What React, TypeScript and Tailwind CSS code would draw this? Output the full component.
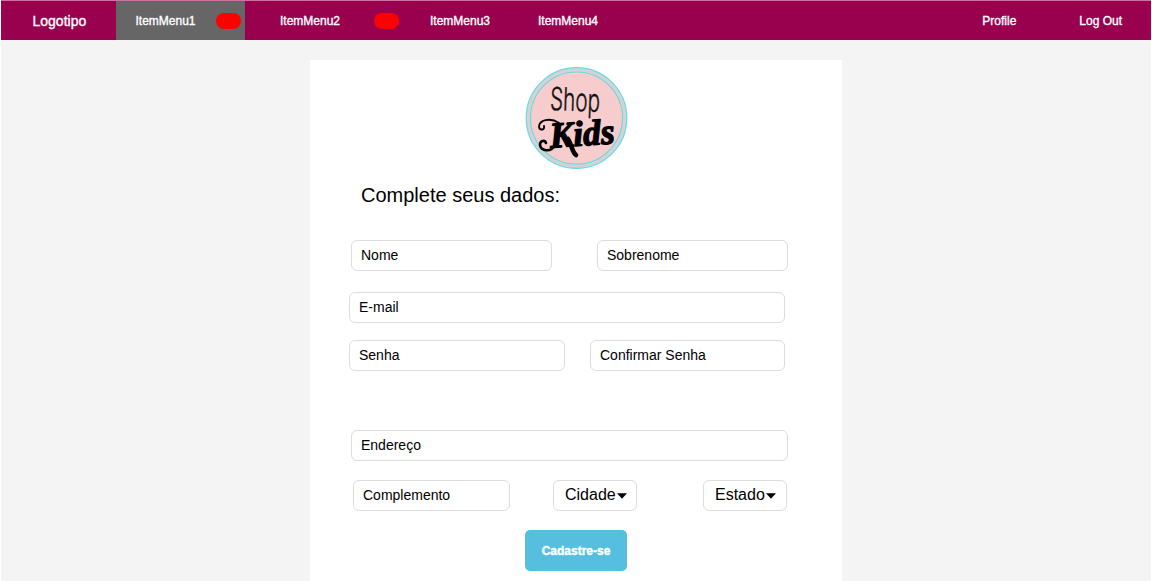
import React from "react";

function Field({ label, className }: { label: string; className: string }) {
  return (
    <div
      className={`flex h-[31px] shrink-0 items-center rounded-[6px] border border-[#dcdcdc] bg-white pb-[2px] pl-[9px] text-[14px] leading-none ${className}`}
    >
      {label}
    </div>
  );
}

function Select({ label, className }: { label: string; className: string }) {
  return (
    <div
      className={`flex h-[31px] w-[84px] shrink-0 items-center rounded-[6px] border border-[#dcdcdc] bg-white pb-[2px] pl-[11px] text-[16px] leading-none ${className}`}
    >
      {label}
      <svg className="mt-[3px] ml-[1px] shrink-0" width="10" height="6" viewBox="0 0 10 6">
        <path d="M0 0.2H10L5 5.8Z" fill="#000" />
      </svg>
    </div>
  );
}

function Badge({ className }: { className: string }) {
  return <span className={`h-[16px] w-[25px] shrink-0 rounded-[8px] bg-[#ff0000] ${className}`} />;
}

function Logo() {
  return (
    <svg className="ml-[215px] block" width="104" height="104" viewBox="0 0 104 104">
      <circle cx="51.5" cy="52" r="50.3" fill="#d3d3d5" stroke="#67dbe2" strokeWidth="1.2" />
      <circle cx="51.5" cy="52" r="46" fill="#f6cccc" stroke="#67dbe2" strokeWidth="1.1" />
      <text
        x="25"
        y="45"
        fontFamily="Inter, sans-serif"
        fontWeight="300"
        fontSize="32"
        textLength="50"
        lengthAdjust="spacingAndGlyphs"
        fill="#111"
        stroke="#111"
        strokeWidth="0.4"
        transform="rotate(2 50 35)"
      >
        Shop
      </text>
      <g transform="rotate(-4 52 75)">
        <text
          x="25"
          y="80"
          fontFamily="'Liberation Serif', serif"
          fontWeight="700"
          fontStyle="italic"
          fontSize="36"
          textLength="65"
          lengthAdjust="spacingAndGlyphs"
          fill="#000"
          stroke="#000"
          strokeWidth="1.3"
          strokeLinejoin="round"
        >
          Kids
        </text>
      </g>
      <g fill="none" stroke="#000" strokeLinecap="round">
        <path d="M34 57C25 51 14 54 14 61C15 65 20 64 19 60" strokeWidth="1.9" />
        <path d="M30 79C26 87 16 85 15 79C15 74 20 74 21 77" strokeWidth="2.6" />
        <path d="M43 73C47 79 47 86 51 89" strokeWidth="4.6" />
      </g>
    </svg>
  );
}

export default function App() {
  return (
    <div className="h-[581px] w-[1152px] overflow-hidden bg-white px-px font-['Liberation_Sans',Arial,sans-serif] text-black">
      <div className="flex h-full flex-col bg-[#f4f4f4]">
        <nav className="flex h-[40px] shrink-0 items-center border-t border-[#d171a3] bg-[#99004d] text-[12px] leading-none whitespace-nowrap text-white [-webkit-text-stroke:0.35px_white]">
          <div className="w-[115px] shrink-0 pl-[31.5px] text-[14px]">Logotipo</div>
          <div className="flex h-full w-[129px] shrink-0 items-center bg-[#666666] pl-[19.5px]">
            <span className="w-[80px] shrink-0">ItemMenu1</span>
            <Badge className="" />
          </div>
          <div className="flex w-[150px] shrink-0 items-center pl-[35px]">
            <span className="w-[93.5px] shrink-0">ItemMenu2</span>
            <Badge className="-mr-[4px]" />
          </div>
          <div className="w-[108px] shrink-0 pl-[35px]">ItemMenu3</div>
          <div className="w-[108px] shrink-0 pl-[35px]">ItemMenu4</div>
          <div className="ml-auto flex pr-[29px]">
            <span className="w-[97px]">Profile</span>
            <span>Log Out</span>
          </div>
        </nav>

        <main className="mt-[20px] ml-[309px] w-[532px] flex-1 bg-white pt-[6px]">
          <Logo />
          <h1 className="mt-[13px] ml-[51px] text-[20px] leading-[24px]">Complete seus dados:</h1>
          <div className="mt-[33px] flex">
            <Field label="Nome" className="ml-[41px] w-[201px]" />
            <Field label="Sobrenome" className="ml-[45px] w-[191px]" />
          </div>
          <div className="mt-[21px] flex">
            <Field label="E-mail" className="ml-[39px] w-[436px]" />
          </div>
          <div className="mt-[17px] flex">
            <Field label="Senha" className="ml-[39px] w-[216px]" />
            <Field label="Confirmar Senha" className="ml-[25px] w-[195px]" />
          </div>
          <div className="mt-[59px] flex">
            <Field label="Endereço" className="ml-[41px] w-[437px]" />
          </div>
          <div className="mt-[19px] flex">
            <Field label="Complemento" className="ml-[43px] w-[157px]" />
            <Select label="Cidade" className="ml-[43px]" />
            <Select label="Estado" className="ml-[66px]" />
          </div>
          <button className="mt-[19px] ml-[215px] flex h-[41px] w-[102px] items-center justify-center rounded-[5px] bg-[#56bfdf] text-[12px] leading-none font-bold text-white [-webkit-text-stroke:0.4px_white]">
            Cadastre-se
          </button>
        </main>
      </div>
    </div>
  );
}
